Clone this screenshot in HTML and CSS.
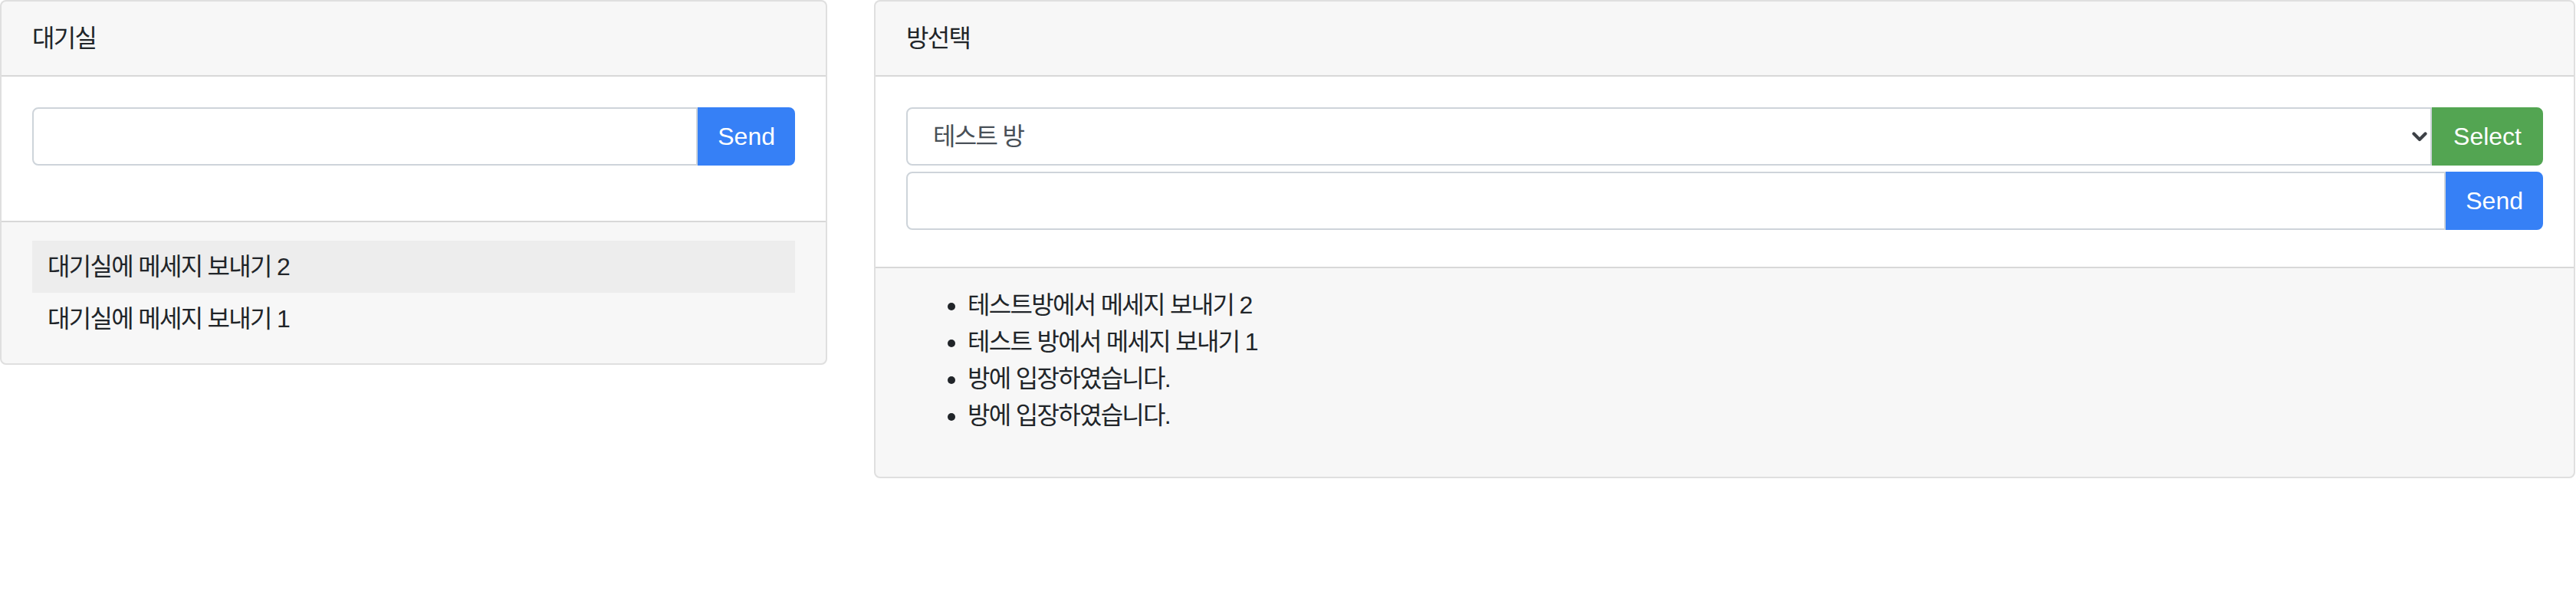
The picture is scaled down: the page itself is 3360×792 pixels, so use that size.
FILE: index.html
```html
<!DOCTYPE html>
<html lang="ko">
<head>
<meta charset="utf-8">
<title>채팅</title>
<link rel="stylesheet" href="styles.css">
</head>
<body>
<div class="page">
  <section class="card">
    <div class="card-header ko">대기실</div>
    <div class="card-body">
      <form class="input-group group-lg">
        <input class="form-control" type="text">
        <button class="btn btn-primary" type="button">Send</button>
      </form>
    </div>
    <div class="card-footer">
      <ul class="msg-list ko">
        <li class="msg-item active">대기실에 메세지 보내기 2</li>
        <li class="msg-item">대기실에 메세지 보내기 1</li>
      </ul>
    </div>
  </section>

  <section class="card">
    <div class="card-header ko">방선택</div>
    <div class="card-body">
      <div class="input-group group-sm">
        <div class="select-wrap">
          <select class="form-select ko">
            <option>테스트 방</option>
          </select>
          <svg class="chevron" width="20" height="13" viewBox="0 0 20 13" aria-hidden="true">
            <polyline points="2.5,2.5 10,10 17.5,2.5" fill="none" stroke="#3d4146" stroke-width="4.2" stroke-linecap="round" stroke-linejoin="round"/>
          </svg>
        </div>
        <button class="btn btn-success" type="button">Select</button>
      </div>
      <div class="input-group group-sm">
        <input class="form-control" type="text">
        <button class="btn btn-primary" type="button">Send</button>
      </div>
    </div>
    <div class="card-footer">
      <ul class="room-log ko">
        <li>테스트방에서 메세지 보내기 2</li>
        <li>테스트 방에서 메세지 보내기 1</li>
        <li>방에 입장하였습니다.</li>
        <li>방에 입장하였습니다.</li>
      </ul>
    </div>
  </section>
</div>
</body>
</html>
```

FILE: styles.css
```css
* {
  box-sizing: border-box;
}

html, body {
  margin: 0;
  padding: 0;
  background: #ffffff;
}

body {
  font-family: "Liberation Sans", "Noto Sans CJK KR", sans-serif;
  font-size: 32px;
  line-height: 48px;
  color: #212529;
}

.ko {
  letter-spacing: -1.7px;
}

.page {
  display: grid;
  grid-template-columns: 1079px 2219px;
  column-gap: 61px;
  align-items: start;
}

.card {
  display: flex;
  flex-direction: column;
  background: #ffffff;
  border: 2px solid rgba(0, 0, 0, 0.125);
  border-radius: 8px;
  overflow: hidden;
}

.card-header {
  padding: 24px 40px;
  background: rgba(0, 0, 0, 0.03);
  border-bottom: 2px solid rgba(0, 0, 0, 0.125);
}

.card-body {
  padding: 40px;
}

.card-footer {
  padding: 24px 40px;
  background: rgba(0, 0, 0, 0.03);
  border-top: 2px solid rgba(0, 0, 0, 0.125);
}

.input-group {
  display: flex;
  align-items: stretch;
  margin: 0;
}

.group-lg {
  margin-bottom: 32px;
}

.group-sm {
  margin-bottom: 8px;
}

.form-control,
.form-select {
  font-family: inherit;
  font-size: 32px;
  line-height: 48px;
  height: 76px;
  color: #495057;
  background: #ffffff;
  border: 2px solid #ced4da;
  border-radius: 8px 0 0 8px;
  margin: 0;
  outline: none;
}

.form-control {
  flex: 1 1 auto;
  min-width: 0;
  padding: 12px 24px;
}

.select-wrap {
  position: relative;
  flex: 1 1 auto;
  min-width: 0;
  display: flex;
}

.form-select {
  width: 100%;
  padding: 12px 60px 12px 33px;
  appearance: none;
  -webkit-appearance: none;
}

.chevron {
  position: absolute;
  right: 6px;
  top: 32px;
  pointer-events: none;
}

.btn {
  font-family: inherit;
  font-size: 32px;
  line-height: 48px;
  padding: 12px 24px;
  border: 2px solid transparent;
  border-radius: 0 8px 8px 0;
  color: #ffffff;
  margin: 0;
  cursor: pointer;
  flex: 0 0 auto;
}

.btn-primary {
  background: #3680f6;
  border-color: #3680f6;
}

.btn-success {
  background: #53a552;
  border-color: #53a552;
  padding: 12px 26px;
}

.msg-list {
  list-style: none;
  margin: 0;
  padding: 0;
}

.msg-item {
  padding: 10px 20px;
}

.msg-item.active {
  background: #ededed;
}

.room-log {
  margin: 0 0 32px;
  padding-left: 80px;
}
```
